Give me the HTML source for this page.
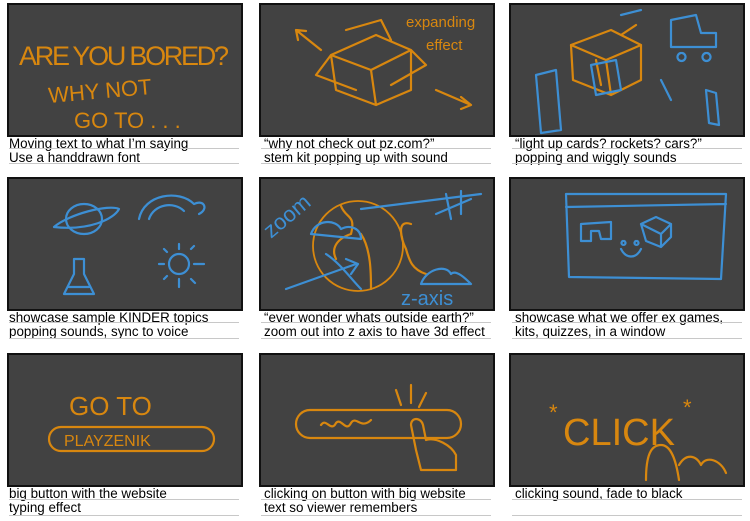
<!DOCTYPE html>
<html><head><meta charset="utf-8"><style>
body{margin:0;width:750px;height:521px;background:#fff;position:relative;overflow:hidden;font-family:"Liberation Sans",Arial,sans-serif}
.p{position:absolute;width:232px;height:130px;background:#424242;border:2px solid #111;box-sizing:content-box}
.p svg{position:absolute;left:0;top:0}
.c{position:absolute;font-size:13.4px;line-height:14px;color:#000;white-space:nowrap}
.l{position:absolute;height:1px;background:#c8c8c8;width:230px}
.o{stroke:#d8870f;fill:none;stroke-width:2.2;stroke-linecap:round;stroke-linejoin:round}
.b{stroke:#3d8fd4;fill:none;stroke-width:2.2;stroke-linecap:round;stroke-linejoin:round}
.to{fill:#d8870f;font-family:"Liberation Sans",sans-serif}
.tb{fill:#3d8fd4;font-family:"Liberation Sans",sans-serif}
</style></head><body>

<div class="p" style="left:7px;top:3px"><svg width="232" height="130">
<text class="to" x="10" y="60" font-size="27" textLength="210">ARE YOU BORED?</text>
<text class="to" x="40" y="98" font-size="22" transform="rotate(-5 40 98)">WHY NOT</text>
<text class="to" x="65" y="123" font-size="22">GO TO . . .</text>
</svg></div>
<div class="c" style="left:9px;top:137px">Moving text to what I’m saying<br>Use a handdrawn font</div>
<div class="l" style="left:9px;top:148px"></div><div class="l" style="left:9px;top:163px"></div>

<div class="p" style="left:259px;top:3px"><svg width="232" height="130">
<path class="o" d="M70 50 L115 30 L150 45 L110 65 Z M70 50 L75 85 L115 100 L110 65 M115 100 L150 85 L150 45 M70 50 L55 70 L95 85 M150 45 L165 60 L130 80 M85 25 L120 15 L130 35"/>
<path class="o" d="M60 45 L35 25 M35 25 L37 35 M35 25 L45 26 M175 85 L210 100 M210 100 L200 92 M210 100 L200 104"/>
<text class="to" x="145" y="22" font-size="15">expanding</text>
<text class="to" x="165" y="45" font-size="15">effect</text>
</svg></div>
<div class="c" style="left:264px;top:137px">“why not check out pz.com?”<br>stem kit popping up with sound</div>
<div class="l" style="left:261px;top:148px"></div><div class="l" style="left:261px;top:163px"></div>

<div class="p" style="left:509px;top:3px"><svg width="232" height="130">
<path class="o" d="M60 40 L100 25 L130 40 L95 55 Z M60 40 L62 75 L100 90 L95 55 M100 90 L130 75 L130 40 M85 55 L90 80 M110 30 L125 20"/>
<path class="b" d="M25 70 L45 65 L50 125 L30 128 Z M80 60 L105 55 L110 85 L85 90 Z M195 85 L205 88 L208 120 L198 118 Z M160 15 L185 10 L190 28 L205 28 L205 42 L160 42 Z M170 48 a4 4 0 1 0 1 0 M195 48 a4 4 0 1 0 1 0 M110 10 L130 5 M150 75 L160 95"/>
</svg></div>
<div class="c" style="left:515px;top:137px">“light up cards? rockets? cars?”<br>popping and wiggly sounds</div>
<div class="l" style="left:512px;top:148px"></div><div class="l" style="left:512px;top:163px"></div>

<div class="p" style="left:7px;top:177px"><svg width="232" height="130">
<ellipse class="b" cx="75" cy="40" rx="18" ry="15"/><path class="b" d="M45 48 C60 35 100 25 110 30 C105 40 80 52 45 48"/>
<path class="b" d="M130 40 C135 15 170 10 185 25 C195 20 200 30 190 35 M140 40 C145 25 165 22 175 32"/>
<circle class="b" cx="170" cy="85" r="10"/><path class="b" d="M170 65 V70 M170 100 V108 M150 85 H155 M185 85 H195 M155 70 L158 73 M182 70 L185 67 M155 100 L158 97 M182 100 L186 104"/>
<path class="b" d="M65 80 L75 80 L75 95 L85 115 L55 115 L65 95 Z M60 108 L80 108"/>
</svg></div>
<div class="c" style="left:9px;top:311px">showcase sample KINDER topics<br>popping sounds, sync to voice</div>
<div class="l" style="left:9px;top:322px"></div><div class="l" style="left:9px;top:338px"></div>

<div class="p" style="left:259px;top:177px"><svg width="232" height="130">
<circle class="o" cx="97" cy="67" r="45" style="stroke-width:1.8"/>
<path class="o" d="M80 27 C85 40 95 35 90 55 C75 60 70 70 75 80 M100 55 C110 70 110 95 110 110 M150 45 C135 40 140 60 145 70 C148 80 150 90 165 95"/>
<path class="b" d="M50 55 C55 40 75 40 80 50 C90 45 100 50 100 60 Z M160 105 C165 90 185 85 190 95 C195 90 205 100 210 105 Z"/>
<path class="b" d="M25 110 L95 85 M85 80 L97 85 L90 95 M65 75 C80 85 90 100 100 110 M100 30 L220 15"/>
<path class="b" d="M210 20 L175 35 M185 15 L190 40 M200 12 L200 35"/>
<text class="tb" x="10" y="60" font-size="22" transform="rotate(-40 10 60)">zoom</text>
<text class="tb" x="140" y="126" font-size="20">z-axis</text>
</svg></div>
<div class="c" style="left:264px;top:311px">“ever wonder whats outside earth?”<br>zoom out into z axis to have 3d effect</div>
<div class="l" style="left:261px;top:322px"></div><div class="l" style="left:261px;top:338px"></div>

<div class="p" style="left:509px;top:177px"><svg width="232" height="130">
<path class="b" d="M55 15 L215 15 L210 100 L58 98 Z M55 28 L215 25 M70 45 L100 43 L100 60 L90 60 L88 52 L80 52 L80 62 L70 62 Z M130 45 L145 38 L160 45 L150 55 Z M130 45 L135 62 L150 68 L150 55 M150 68 L160 58 L160 45 M110 70 C115 80 125 80 130 70 M112 62 a2 2 0 1 0 1 0 M125 62 a2 2 0 1 0 1 0"/>
</svg></div>
<div class="c" style="left:515px;top:311px">showcase what we offer ex games,<br>kits, quizzes, in a window</div>
<div class="l" style="left:512px;top:322px"></div><div class="l" style="left:512px;top:338px"></div>

<div class="p" style="left:7px;top:353px"><svg width="232" height="130">
<text class="to" x="60" y="60" font-size="26">GO TO</text>
<rect class="o" x="40" y="72" width="165" height="24" rx="12"/>
<text class="to" x="55" y="91" font-size="16">PLAYZENIK</text>
</svg></div>
<div class="c" style="left:9px;top:487px">big button with the website<br>typing effect</div>
<div class="l" style="left:9px;top:499px"></div><div class="l" style="left:9px;top:515px"></div>

<div class="p" style="left:259px;top:353px"><svg width="232" height="130">
<rect class="o" x="35" y="55" width="165" height="28" rx="14"/>
<path class="o" d="M60 70 C65 62 70 78 75 68 C80 62 85 78 90 68 C95 60 100 75 110 65 M135 35 L140 50 M150 30 L150 48 M165 38 L158 52 M155 95 L150 70 C150 62 160 62 162 70 L165 85 C175 82 190 90 195 100 L195 115 L160 115 Z"/>
</svg></div>
<div class="c" style="left:264px;top:487px">clicking on button with big website<br>text so viewer remembers</div>
<div class="l" style="left:261px;top:499px"></div><div class="l" style="left:261px;top:515px"></div>

<div class="p" style="left:509px;top:353px"><svg width="232" height="130">
<text class="to" x="52" y="90" font-size="38">CLICK</text>
<text class="to" x="38" y="65" font-size="22">*</text>
<text class="to" x="172" y="60" font-size="22">*</text>
<path class="o" d="M150 90 C140 90 135 100 135 125 M150 90 C160 90 165 105 168 125 M168 110 C175 98 185 100 190 110 C195 100 210 105 215 118"/>
</svg></div>
<div class="c" style="left:515px;top:487px">clicking sound, fade to black</div>
<div class="l" style="left:512px;top:499px"></div><div class="l" style="left:512px;top:515px"></div>

</body></html>
